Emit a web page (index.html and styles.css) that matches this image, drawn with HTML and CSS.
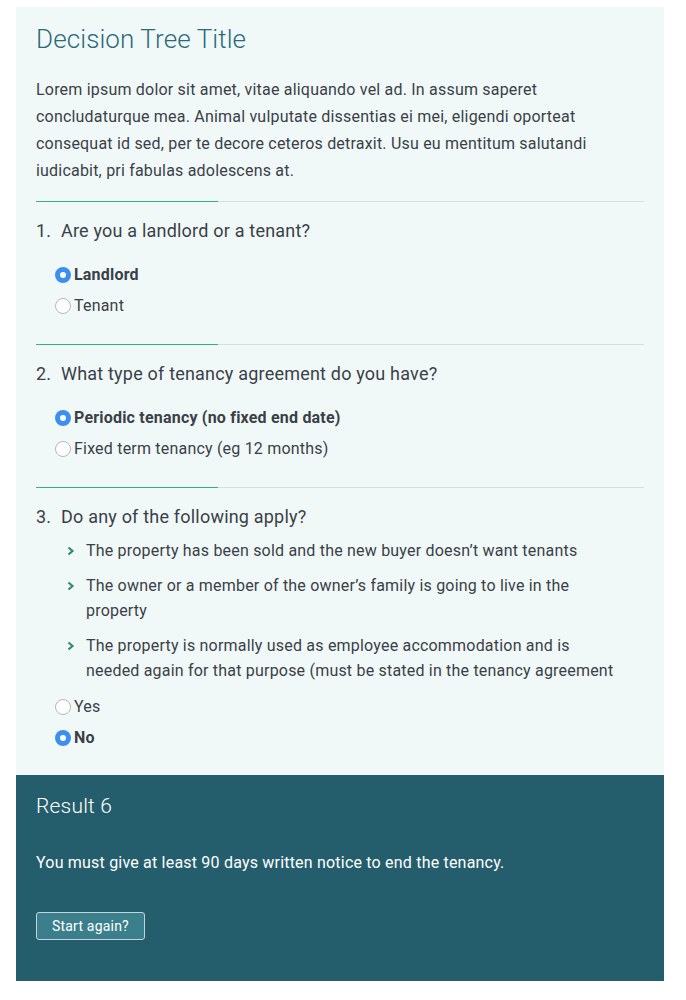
FILE: index.html
```html
<!DOCTYPE html>
<html lang="en">
<head>
<meta charset="utf-8">
<title>Decision Tree Title</title>
<link rel="stylesheet" href="styles.css">
</head>
<body>
<div class="page">
  <section class="tree">
    <h1 class="tree-title">Decision Tree Title</h1>
    <p class="intro">Lorem ipsum dolor sit amet, vitae aliquando vel ad. In assum saperet concludaturque mea. Animal vulputate dissentias ei mei, eligendi oporteat consequat id sed, per te decore ceteros detraxit. Usu eu mentitum salutandi iudicabit, pri fabulas adolescens at.</p>

    <div class="question">
      <div class="divider"><span class="divider-accent"></span></div>
      <h2 class="q-title"><span class="q-num">1.</span>Are you a landlord or a tenant?</h2>
      <ul class="options">
        <li class="option checked"><span class="radio"></span><span class="label">Landlord</span></li>
        <li class="option"><span class="radio"></span><span class="label">Tenant</span></li>
      </ul>
    </div>

    <div class="question">
      <div class="divider"><span class="divider-accent"></span></div>
      <h2 class="q-title"><span class="q-num">2.</span>What type of tenancy agreement do you have?</h2>
      <ul class="options">
        <li class="option checked"><span class="radio"></span><span class="label">Periodic tenancy (no fixed end date)</span></li>
        <li class="option"><span class="radio"></span><span class="label">Fixed term tenancy (eg 12 months)</span></li>
      </ul>
    </div>

    <div class="question">
      <div class="divider"><span class="divider-accent"></span></div>
      <h2 class="q-title"><span class="q-num">3.</span>Do any of the following apply?</h2>
      <ul class="bullets">
        <li class="bullet"><svg class="chev" viewBox="0 0 8 10" width="8" height="10"><path d="M1.5 1.5 L5.5 5 L1.5 8.5" fill="none" stroke="#2f8c6c" stroke-width="2.2"/></svg><span>The property has been sold and the new buyer doesn’t want tenants</span></li>
        <li class="bullet"><svg class="chev" viewBox="0 0 8 10" width="8" height="10"><path d="M1.5 1.5 L5.5 5 L1.5 8.5" fill="none" stroke="#2f8c6c" stroke-width="2.2"/></svg><span>The owner or a member of the owner’s family is going to live in the property</span></li>
        <li class="bullet"><svg class="chev" viewBox="0 0 8 10" width="8" height="10"><path d="M1.5 1.5 L5.5 5 L1.5 8.5" fill="none" stroke="#2f8c6c" stroke-width="2.2"/></svg><span>The property is normally used as employee accommodation and is needed again for that purpose (must be stated in the tenancy agreement</span></li>
      </ul>
      <ul class="options options-after">
        <li class="option"><span class="radio"></span><span class="label">Yes</span></li>
        <li class="option checked"><span class="radio"></span><span class="label">No</span></li>
      </ul>
    </div>
  </section>

  <section class="result">
    <h2 class="result-title">Result 6</h2>
    <p class="result-text">You must give at least 90 days written notice to end the tenancy.</p>
    <button class="restart" type="button">Start again?</button>
  </section>
</div>
</body>
</html>
```
FILE: styles.css
```css
* { box-sizing: border-box; }

body {
  margin: 0;
  background: #ffffff;
  font-family: Roboto, "Open Sans", sans-serif;
  letter-spacing: 0.2px;
  color: #3a3f48;
}

.page {
  width: 648px;
  margin: 7px 0 0 16px;
}

.tree {
  background: #f1f9f8;
  padding: 17px 20px 22px 20px;
}

.tree-title {
  margin: 0;
  font-size: 26px;
  line-height: 31px;
  font-weight: 300;
  letter-spacing: 0.1px;
  color: #2b6a7a;
}

.intro {
  margin: 21px 0 17px 0;
  font-size: 16px;
  line-height: 27px;
}

.divider {
  height: 1px;
  background: #d6dddd;
}

.divider-accent {
  display: block;
  width: 182px;
  height: 1px;
  background: #35b07f;
}

.q-title {
  margin: 15px 0 15px 0;
  font-size: 18px;
  line-height: 27px;
  font-weight: 400;
  display: flex;
}

.q-num {
  width: 25px;
  flex: none;
}

.options {
  list-style: none;
  margin: 0 0 23px 0;
  padding: 0 0 0 19px;
}

.question:last-child .options { margin-bottom: 0; }

.option {
  display: flex;
  align-items: center;
  height: 31px;
  font-size: 16px;
}

.radio {
  width: 16px;
  height: 16px;
  border-radius: 50%;
  border: 1px solid #b5b8bb;
  background: #ffffff;
  margin-right: 3px;
  flex: none;
}

.option.checked .radio {
  border: 5px solid #3d8fef;
  background: #ffffff;
}

.option.checked .label {
  font-weight: 700;
}

.bullets {
  list-style: none;
  margin: -7px 0 8px 0;
  padding: 0 26px 0 31px;
  display: flex;
  flex-direction: column;
  gap: 10px;
}

.bullet {
  display: flex;
  align-items: flex-start;
  font-size: 16px;
  line-height: 25px;
}

.chev {
  flex: none;
  margin: 8px 11px 0 0;
}

.result {
  background: #245e6d;
  color: #ffffff;
  padding: 17px 20px 41px 20px;
}

.result-title {
  margin: 0;
  font-size: 21px;
  line-height: 28px;
  font-weight: 300;
}

.result-text {
  margin: 30px 0 36px 0;
  font-size: 16px;
  line-height: 26px;
}

.restart {
  display: block;
  height: 28px;
  padding: 0 15px;
  background: #3c7f8c;
  border: 1px solid #c5d4d7;
  border-radius: 3px;
  color: #ffffff;
  font-family: Roboto, "Open Sans", sans-serif;
  font-size: 14px;
  letter-spacing: 0.2px;
}
```
